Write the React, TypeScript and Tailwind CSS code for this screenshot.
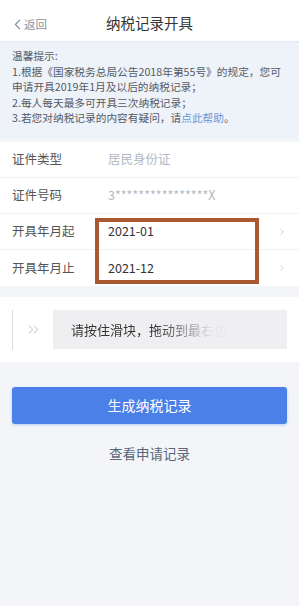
import { ChevronLeft, ChevronRight, ChevronsRight } from 'lucide-react';

const font = { fontFamily: '"Noto Sans CJK SC", "Noto Sans", sans-serif' };

const rows = [
  { label: '证件类型', value: '居民身份证', muted: true },
  { label: '证件号码', value: '3****************X', muted: true },
  { label: '开具年月起', value: '2021-01', muted: false, arrow: true },
  { label: '开具年月止', value: '2021-12', muted: false, arrow: true },
];

export default function App() {
  return (
    <div className="flex h-[606px] w-[299px] flex-col overflow-hidden bg-[#f3f5f9]" style={font}>
      {/* Header */}
      <div className="relative flex h-[42px] shrink-0 items-center justify-center border-b border-[#e6e9ef] bg-white">
        <div className="absolute left-[9px] top-[16px] flex items-center text-[#8a8f99]">
          <ChevronLeft className="size-[17px]" strokeWidth={1.6} />
          <span className="-ml-[2px] text-[11.5px] leading-none">返回</span>
        </div>
        <span className="mt-[4px] text-[14.5px] text-[#333]">纳税记录开具</span>
      </div>

      {/* Tips */}
      <div className="h-[97px] shrink-0 whitespace-nowrap bg-[#eef2f9] px-[12px] pt-[6px] text-[10.7px] leading-[15.5px] text-[#555b66]">
        <p>温馨提示:</p>
        <p>1.根据《国家税务总局公告2018年第55号》的规定，您可</p>
        <p>申请开具2019年1月及以后的纳税记录；</p>
        <p>2.每人每天最多可开具三次纳税记录；</p>
        <p>
          3.若您对纳税记录的内容有疑问，请<span className="text-[#6f92d8]">点此帮助</span>。
        </p>
      </div>

      {/* Form */}
      <div className="relative mt-[3px] shrink-0 bg-white">
        {rows.map((r, i) => (
          <div
            key={r.label}
            className={
              'flex h-[36px] items-center pl-[12px] pr-[12px] ' +
              (i < rows.length - 1 ? 'border-b border-[#f1f2f5]' : '')
            }
          >
            <span className="w-[96px] text-[12.5px] text-[#555]">{r.label}</span>
            <span className={'flex-1 text-[12.5px] ' + (r.muted ? 'text-[#b4b8c0]' : 'text-[#333]')}>
              {r.value}
            </span>
            {r.arrow && <ChevronRight className="size-[10px] text-[#c8ccd3]" strokeWidth={2} />}
          </div>
        ))}
        {/* annotation box */}
        <div className="pointer-events-none absolute left-[95px] top-[76px] h-[66px] w-[164px] border-[4px] border-[#a9582f]" />
      </div>

      {/* Slider */}
      <div className="mt-[11px] flex h-[65px] shrink-0 items-center bg-white px-[12px]">
        <div className="flex h-[39px] flex-1 items-center bg-[#efeff2]">
          <div className="flex h-[40px] w-[41px] items-center justify-center border-l border-[#dcdde2] bg-white">
            <ChevronsRight className="size-[17px] text-[#a9adb6]" strokeWidth={1.2} />
          </div>
          <span className="ml-[18px] bg-gradient-to-r from-[#333] from-55% to-[#e6e6ea] to-90% bg-clip-text text-[13px] text-transparent">
            请按住滑块，拖动到最右边
          </span>
        </div>
      </div>

      {/* Actions */}
      <div className="px-[12px] pt-[25px]">
        <button className="flex h-[37px] w-full items-center justify-center rounded-[3px] bg-[#4a80e8] text-[14px] text-white shadow-[0_1px_3px_rgba(74,128,232,0.35)]">
          生成纳税记录
        </button>
        <div className="mt-[19px] text-center text-[13.5px] text-[#5b6578]">查看申请记录</div>
      </div>
    </div>
  );
}
